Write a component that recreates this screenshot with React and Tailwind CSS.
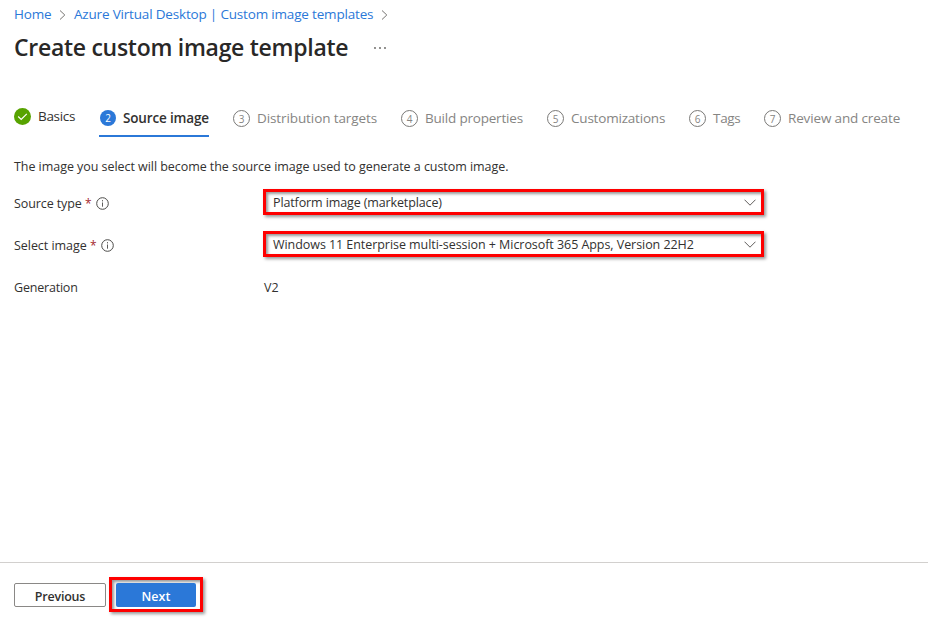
const STEPS = [
  { n: 3, label: 'Distribution targets', box: 'w-[168px]', track: 'tracking-[-0.1px]' },
  { n: 4, label: 'Build properties', box: 'w-[146px]', track: 'tracking-[-0.2px]' },
  { n: 5, label: 'Customizations', box: 'w-[142px]', track: 'tracking-[-0.2px]' },
  { n: 6, label: 'Tags', box: 'w-[75px]', track: 'tracking-[-0.3px]' },
  { n: 7, label: 'Review and create', box: 'w-[140px]', track: 'tracking-[-0.15px]' },
];

function Separator({ className }) {
  return (
    <svg className={`shrink-0 ${className}`} width="7" height="10" viewBox="0 0 7 10" fill="none" stroke="#767472" strokeWidth="1">
      <path d="M1 0.5 5.8 5 1 9.5" />
    </svg>
  );
}

function Info() {
  return (
    <svg className="shrink-0" width="13" height="13" viewBox="0 0 13 13" fill="none" stroke="#4b4a48">
      <circle cx="6.5" cy="6.5" r="5.8" strokeWidth="1" />
      <path d="M6.5 5.5v4.2M6.5 3.1v1.3" strokeWidth="0.9" />
    </svg>
  );
}

function Label({ children, width, track }) {
  return (
    <div className="flex h-[26px] w-[249px] shrink-0 items-center pt-[3px]">
      <span className={`${width} ${track}`}>{children}</span>
      <span className="w-[11px] text-[12px] text-[#a4262c]">*</span>
      <Info />
    </div>
  );
}

function Select({ children, track }) {
  return (
    <div className="h-[26px] w-[501px] shrink-0 border-[3px] border-[#fe0000] shadow-[2px_2px_3px_rgba(0,0,0,0.4),inset_2px_2px_3px_rgba(0,0,0,0.4)]">
      <div className="flex h-full items-center justify-between pr-[5px] pl-[7px]">
        <span className={`pt-[2px] ${track}`}>{children}</span>
        <svg width="12" height="7" viewBox="0 0 12 7" fill="none" stroke="#605e5c">
          <path d="M0.5 0.7 6 6.2 11.5 0.7" />
        </svg>
      </div>
    </div>
  );
}

export default function App() {
  return (
    <div className="flex h-[619px] w-[928px] flex-col overflow-hidden bg-white font-['Open_Sans','Noto_Sans',sans-serif] text-[12.5px] leading-[18px] whitespace-nowrap text-[#323130]">
      <nav className="flex h-[28px] shrink-0 items-center pl-[14px] text-[13.5px] text-[#2b78d8]">
        <span className="w-[45px] tracking-[-0.2px]">Home</span>
        <Separator className="mt-[2px]" />
        <span className="ml-[8px] w-[307px] tracking-[-0.18px]">Azure Virtual Desktop | Custom image templates</span>
        <Separator className="mt-[2px]" />
      </nav>
      <header className="flex h-[40px] shrink-0 items-center pl-[14px]">
        <h1 className="w-[360px] pb-[2px] text-[23px] font-semibold tracking-[-0.28px] text-[#292827]">Create custom image template</h1>
        <svg width="12" height="2" viewBox="0 0 12 2" fill="#605e5c">
          <circle cx="1" cy="1" r="0.9" />
          <circle cx="6" cy="1" r="0.9" />
          <circle cx="11" cy="1" r="0.9" />
        </svg>
      </header>
      <div className="mt-[32px] flex h-[37px] shrink-0 pl-[14px] text-[13.5px]">
        <div className="flex h-[33px] w-[85px] items-center">
          <svg width="17" height="17" viewBox="0 0 17 17">
            <circle cx="8.5" cy="8.5" r="8.5" fill="#57a300" />
            <path d="M4.2 8.5 7.2 11.4 12.8 5.8" fill="none" stroke="#fff" strokeWidth="1.2" />
          </svg>
          <span className="ml-[7px] pb-px tracking-[-0.3px]">Basics</span>
        </div>
        <div className="mr-[24px] flex h-[37px] w-[110px] items-center border-b-2 border-[#2b78d8] pt-[2px]">
          <span className="mb-px ml-px flex size-[16px] items-center justify-center rounded-full bg-[#2b78d8] text-[10px] text-white">2</span>
          <span className="ml-[7px] pb-[2px] font-semibold tracking-[-0.15px]">Source image</span>
        </div>
        {STEPS.map((s) => (
          <div key={s.n} className={`flex h-[37px] shrink-0 items-center text-[#868583] ${s.box}`}>
            <span className="flex size-[17px] shrink-0 items-center justify-center rounded-full border border-[#7a7977] text-[10px]">{s.n}</span>
            <span className={`ml-[7px] pb-[2px] ${s.track}`}>{s.label}</span>
          </div>
        ))}
      </div>
      <main className="flex grow flex-col pl-[14px]">
        <p className="mt-[21px] mb-[13px] tracking-[-0.05px]">The image you select will become the source image used to generate a custom image.</p>
        <div className="mb-[16px] flex">
          <Label width="w-[71px]" track="tracking-[-0.1px]">Source type</Label>
          <Select track="tracking-[-0.12px]">Platform image (marketplace)</Select>
        </div>
        <div className="mb-[16px] flex">
          <Label width="w-[76px]" track="tracking-[-0.05px]">Select image</Label>
          <Select track="tracking-[-0.055px]">Windows 11 Enterprise multi-session + Microsoft 365 Apps, Version 22H2</Select>
        </div>
        <div className="flex h-[26px] items-center pt-[3px]">
          <span className="w-[250px] tracking-[-0.2px]">Generation</span>
          <span>V2</span>
        </div>
      </main>
      <footer className="flex h-[57px] shrink-0 items-start border-t border-[#d2d0ce] pl-[14px] font-semibold">
        <button className="mt-[20px] h-[24px] w-[92px] rounded-[2px] border border-[#8a8886] pt-[3px] tracking-[-0.2px]">Previous</button>
        <div className="mt-[14px] ml-[3px] flex h-[35px] w-[94px] items-center justify-center border-[3px] border-[#fe0000] shadow-[2px_2px_3px_rgba(0,0,0,0.4),inset_2px_2px_3px_rgba(0,0,0,0.4)]">
          <button className="h-[24px] w-[80px] rounded-[2px] bg-[#2b78d8] pt-[4px] text-white">Next</button>
        </div>
      </footer>
    </div>
  );
}
